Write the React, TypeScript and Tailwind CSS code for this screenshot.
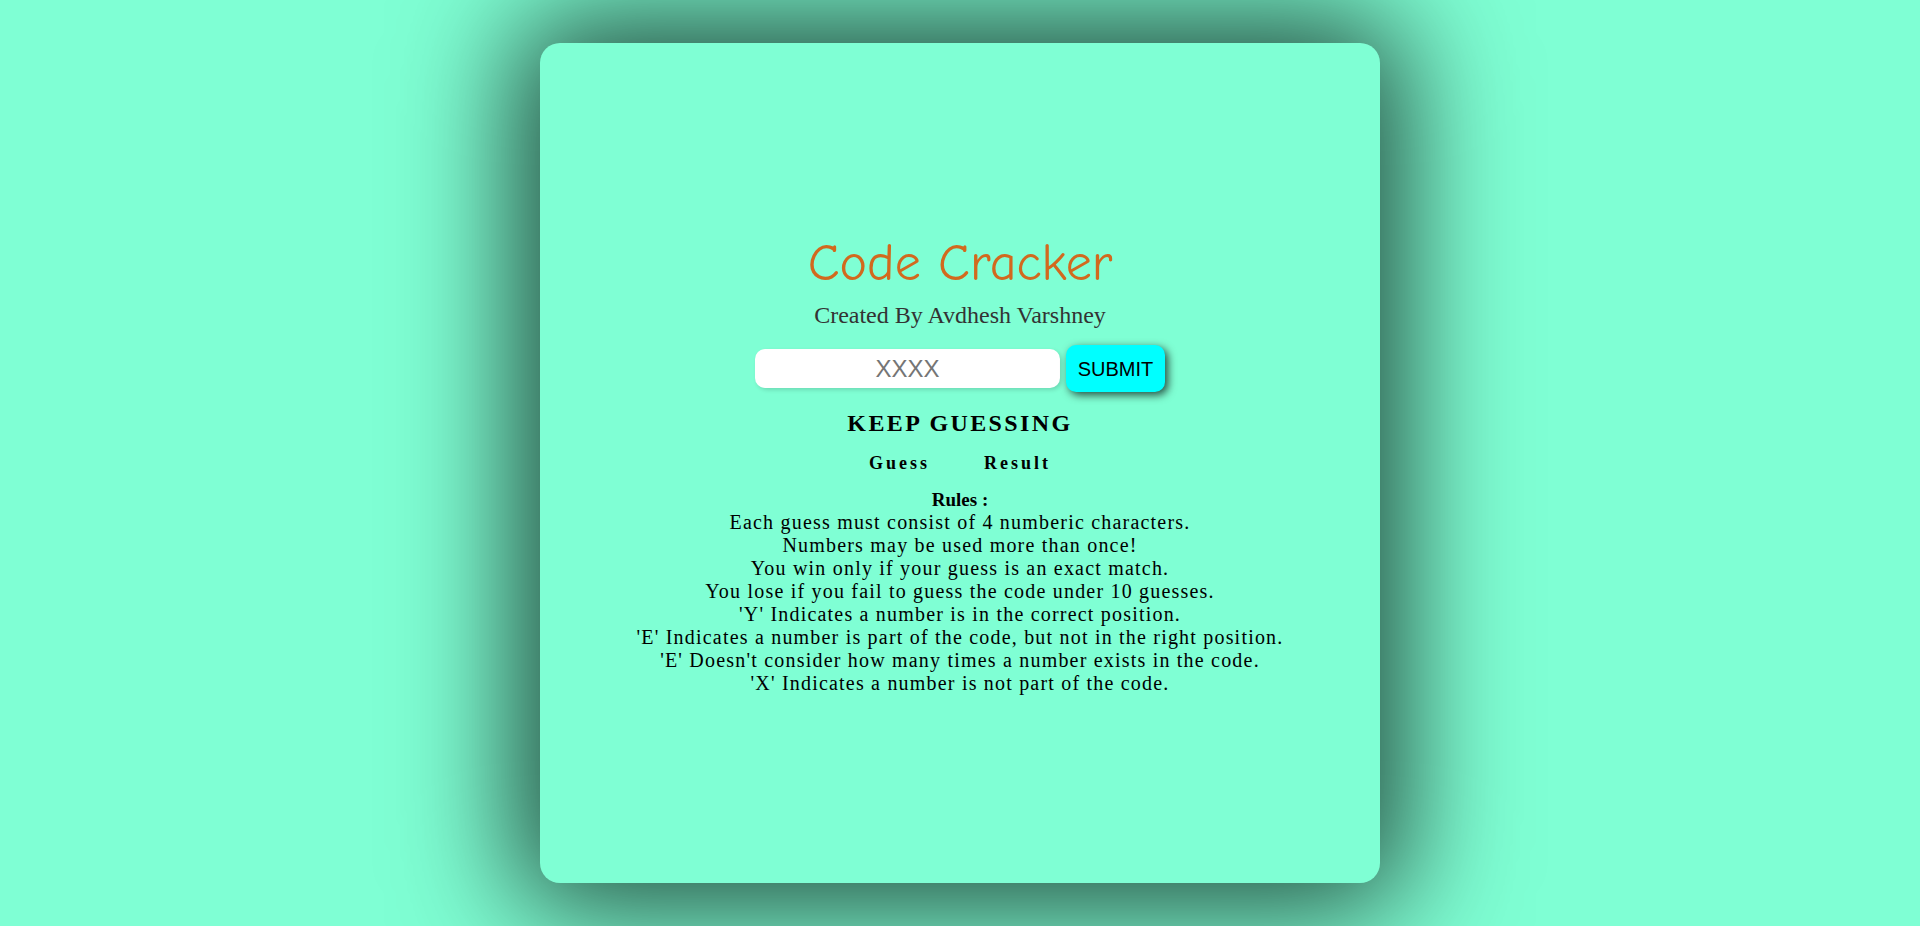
const rules = [
  "Each guess must consist of 4 numberic characters.",
  "Numbers may be used more than once!",
  "You win only if your guess is an exact match.",
  "You lose if you fail to guess the code under 10 guesses.",
  "'Y' Indicates a number is in the correct position.",
  "'E' Indicates a number is part of the code, but not in the right position.",
  "'E' Doesn't consider how many times a number exists in the code.",
  "'X' Indicates a number is not part of the code.",
];

export default function App() {
  return (
    <div className="flex h-[926px] w-full items-center justify-center bg-[#7fffd4]">
      <div className="flex h-[840px] w-[840px] flex-col items-center justify-center rounded-[20px] bg-[#7fffd4] pt-[4px] shadow-[0_0_120px_24px_rgba(0,0,0,0.72)]">
        <h1 className="text-[52px] leading-[56px] text-[#d2691e] [font-family:'Comic_Sans_MS','Comic_Neue',cursive]">
          Code Cracker
        </h1>
        <p className="mt-[10px] text-[24px] leading-[28px] text-[#333] [font-family:'Liberation_Serif',serif]">
          Created By Avdhesh Varshney
        </p>

        <div className="mt-[16px] flex items-center gap-[6px]">
          <input
            type="text"
            placeholder="XXXX"
            className="h-[39px] w-[305px] rounded-[10px] bg-white text-center text-[24px] text-black shadow-[2px_2px_4px_rgba(0,0,0,0.15)] outline-none placeholder:text-[#757575] [font-family:'Liberation_Sans',sans-serif]"
          />
          <button className="h-[47px] w-[99px] rounded-[10px] bg-[#00ffff] text-[20px] text-black shadow-[3px_3px_9px_rgba(0,0,0,0.7)] [font-family:'Liberation_Sans',sans-serif]">
            SUBMIT
          </button>
        </div>

        <h2 className="mt-[17px] text-[24px] font-bold leading-[28px] tracking-[2.4px] text-black [font-family:'Liberation_Serif',serif]">
          KEEP GUESSING
        </h2>

        <table className="mt-[14px] [font-family:'Liberation_Serif',serif]">
          <thead>
            <tr>
              <th className="px-[27px] text-[18px] font-bold leading-[24px] tracking-[3px]">Guess</th>
              <th className="px-[27px] text-[18px] font-bold leading-[24px] tracking-[3px]">Result</th>
            </tr>
          </thead>
        </table>

        <div className="mt-[13px] flex flex-col items-center text-[20px] leading-[23px] text-black [font-family:'Liberation_Serif',serif]">
          <span className="text-[19px] font-bold">Rules :</span>
          {rules.map((r) => (
            <span key={r} className="tracking-[1.2px]">
              {r}
            </span>
          ))}
        </div>
      </div>
    </div>
  );
}
